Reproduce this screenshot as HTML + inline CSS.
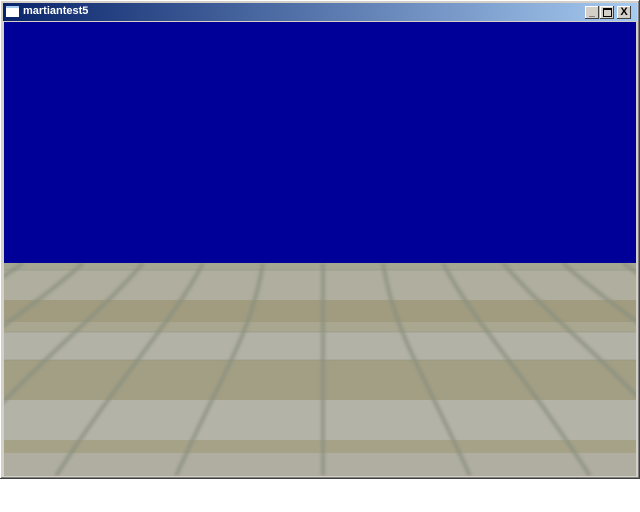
<html><body style="margin:0;width:640px;height:512px;background:#fff;overflow:hidden;position:relative;font-family:'Liberation Sans',sans-serif">
<div style="position:absolute;left:0;top:0;width:640px;height:479px;background:#d4d0c8;box-shadow:inset -1px -1px #404040,inset 1px 1px #fff,inset -2px -2px #808080"></div>
<div style="position:absolute;left:3px;top:3px;width:634px;height:18px;background:linear-gradient(90deg,#0a246a,#a6caf0)"></div>
<div style="position:absolute;left:6px;top:6px;width:13px;height:11px;background:#fff;border-top:2px solid #a6caf0;box-sizing:border-box"></div>
<div style="position:absolute;left:23px;top:5px;color:#fff;font-weight:bold;font-size:11px">martiantest5</div>
<div style="position:absolute;left:585px;top:6px;width:14px;height:13px;background:#d4d0c8;box-shadow:inset -1px -1px #404040,inset 1px 1px #fff;font-size:10px;font-weight:bold;text-align:center;line-height:14px">_</div>
<div style="position:absolute;left:600px;top:6px;width:14px;height:13px;background:#d4d0c8;box-shadow:inset -1px -1px #404040,inset 1px 1px #fff"><div style="position:absolute;left:3px;top:2px;width:7px;height:6px;border:1px solid #000;border-top-width:2px"></div></div>
<div style="position:absolute;left:617px;top:6px;width:14px;height:13px;background:#d4d0c8;box-shadow:inset -1px -1px #404040,inset 1px 1px #fff;font-size:11px;font-weight:bold;text-align:center;line-height:13px">X</div>
<div style="position:absolute;left:4px;top:22px;width:632px;height:241px;background:#000098"></div>
<svg style="position:absolute;left:4px;top:263px" width="632" height="213">
<defs><filter id="f" x="0" y="0" width="100%" height="100%"><feGaussianBlur stdDeviation="1.5"/></filter></defs>
<rect width="632" height="213" fill="#aba891"/>
<rect y="0" width="632" height="7" fill="#a6a793"/>
<rect y="7" width="632" height="30" fill="#b0ae9e"/>
<rect y="37" width="632" height="22" fill="#a19c80"/>
<rect y="59" width="632" height="10" fill="#aaa790"/>
<rect y="69" width="632" height="28" fill="#b3b2a6"/>
<rect y="97" width="632" height="40" fill="#a39f84"/>
<rect y="137" width="632" height="40" fill="#b4b3a8"/>
<rect y="177" width="632" height="13" fill="#a6a288"/>
<rect y="190" width="632" height="23" fill="#b0aea0"/>
<g stroke="#89907f" stroke-width="4" fill="none" opacity="0.75" filter="url(#f)">
<path d="M319 0 V213"/>
<path d="M379 0 C390 70,420 110,466 213"/><path d="M259 0 C248 70,218 110,172 213"/>
<path d="M439 0 C470 60,520 110,586 213"/><path d="M199 0 C168 60,118 110,52 213"/>
<path d="M499 0 C550 60,610 100,706 213"/><path d="M139 0 C88 60,28 100,-68 213"/>
<path d="M559 0 C620 55,700 100,826 213"/><path d="M79 0 C18 55,-62 100,-188 213"/>
<path d="M619 0 C690 50,780 100,946 213"/><path d="M19 0 C-52 50,-142 100,-308 213"/>
</g>
<g stroke="#8c9280" stroke-width="1" opacity="0.5"><path d="M0 7H632M0 69H632M0 97H632"/></g>
</svg>
</body></html>
